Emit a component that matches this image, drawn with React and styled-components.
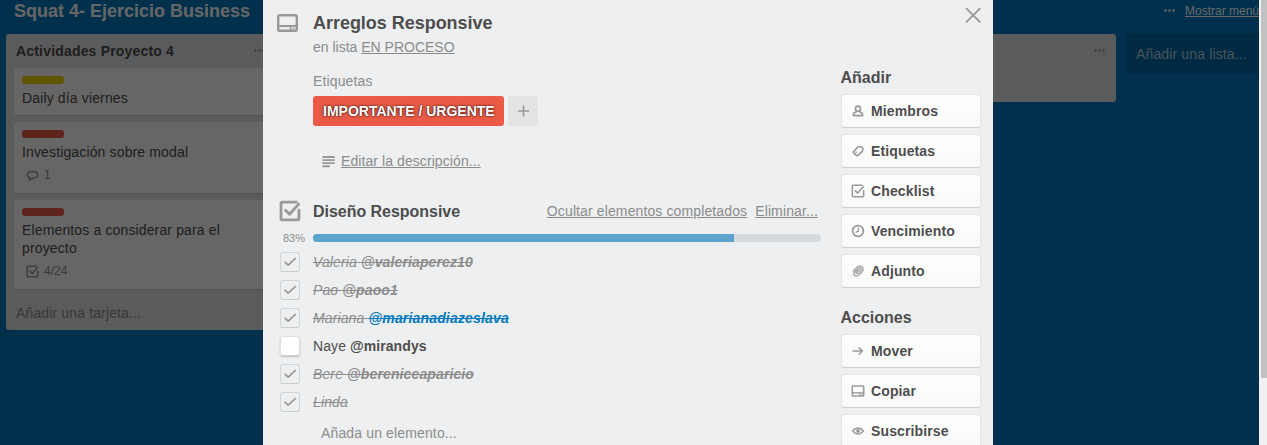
import React from "react";
import styled, { createGlobalStyle, css } from "styled-components";

const Global = createGlobalStyle`
  * { box-sizing: border-box; }
  html, body { margin: 0; padding: 0; overflow: hidden; }
  body { font-family: "Liberation Sans", Arial, sans-serif; font-size: 14px; line-height: 18px; color: #4d4d4d; }
  h1, h2, h3, p { margin: 0; font-weight: 700; }
`;

const Window = styled.div`
  position: relative;
  display: flex;
  width: 1267px;
  height: 445px;
  overflow: hidden;
  letter-spacing: 0.14px;
`;
const Board = styled.div`
  flex: 1;
  min-width: 0;
  overflow: hidden;
  background: #0079bf;
`;
const ScrollTrack = styled.div`
  width: 8px;
  flex: none;
  padding-left: 2px;
  background: #f1f1f1;
`;
const ScrollThumb = styled.div`
  height: 378px;
  background: #c1c1c1;
`;
const BoardHeader = styled.header`
  display: flex;
  justify-content: space-between;
  height: 34px;
  padding-left: 14px;
  color: #fff;
`;
const BoardTitle = styled.h1`
  font-size: 18px;
  line-height: 22px;
  letter-spacing: 0;
`;
const MenuLink = styled.div`
  display: flex;
  gap: 10px;
  width: 95px;
  font-size: 12px;
  line-height: 22px;
  letter-spacing: 0;
  white-space: nowrap;
  svg { margin-top: 9px; flex: none; }
  span { text-decoration: underline; }
`;
const Lists = styled.div`
  display: flex;
  align-items: flex-start;
  gap: 10px;
  padding-left: 6px;
`;
const List = styled.section`
  flex: none;
  width: 270px;
  height: ${(p) => p.$height}px;
  padding: 0 8px;
  border-radius: 3px;
  background: #e2e4e6;
`;
const ListHeader = styled.div`
  display: flex;
  justify-content: space-between;
  height: 34px;
  padding: 8px 3px 0 2px;
  color: #4d4d4d;
  svg { margin-top: 7px; color: #999; }
`;
const ListName = styled.h2`
  font-size: 14px;
  line-height: 18px;
  letter-spacing: 0.18px;
`;
const Card = styled.article`
  height: ${(p) => p.$height}px;
  margin-bottom: 6px;
  padding: 8px;
  border-radius: 3px;
  background: #fff;
  border-bottom: 1px solid #ccc;
`;
const CardLabel = styled.div`
  width: 42px;
  height: 8px;
  margin-bottom: 5px;
  border-radius: 3px;
  background: ${(p) => p.$color};
`;
const CardText = styled.div`
  color: #4d4d4d;
`;
const Badge = styled.div`
  display: flex;
  align-items: center;
  gap: 5px;
  margin: 5px 0 0 4px;
  height: 18px;
  font-size: 12px;
  letter-spacing: 0;
  color: #8c8c8c;
  svg { color: #999; }
`;
const AddCard = styled.div`
  padding: 8px 2px;
  color: #8c8c8c;
`;
const AddList = styled.div`
  flex: none;
  width: 270px;
  height: 40px;
  padding: 11px 10px;
  border-radius: 3px;
  background: #006aa7;
  color: #b8d0de;
`;
const Overlay = styled.div`
  position: absolute;
  inset: 0 8px 0 0;
  display: flex;
  justify-content: center;
  padding-right: 3px;
  background: rgba(0, 0, 0, 0.6);
`;
const Modal = styled.div`
  display: flex;
  width: 730px;
  height: 445px;
  overflow: hidden;
  background: #edeff0;
`;
const Main = styled.main`
  width: 577px;
  padding: 0 19px 0 16px;
`;
const Row = styled.div`
  display: flex;
  align-items: center;
  height: ${(p) => p.$height}px;
`;
const TitleRow = styled.div`
  display: flex;
  height: 38px;
  padding-top: 11px;
`;
const TitleIcon = styled.div`
  width: 36px;
  margin-left: -2px;
  padding-top: 3px;
  color: #999;
  svg { display: block; }
`;
const Gutter = styled.div`
  flex: none;
  width: 34px;
  height: 100%;
  display: flex;
  align-items: center;
  color: #999;
  font-size: 11px;
  letter-spacing: 0;
  svg { display: block; }
`;
const CardTitle = styled.h2`
  font-size: 18px;
  line-height: 24px;
  letter-spacing: -0.03px;
`;
const SectionRow = styled(Row)`
  margin-top: 24px;
`;
const SectionTitle = styled.h3`
  flex: 1;
  padding-top: 2px;
  font-size: 16px;
  line-height: 20px;
  letter-spacing: -0.03px;
`;
const Quiet = styled.span`
  color: #8c8c8c;
  white-space: nowrap;
  ${(p) => p.$link && css`text-decoration: underline;`}
`;
const Intro = styled.div`
  padding-left: 34px;
`;
const InList = styled.div`
  margin-bottom: 16px;
  letter-spacing: 0;
`;
const Labels = styled.div`
  display: flex;
  gap: 4px;
  margin-top: 6px;
`;
const Label = styled.div`
  width: 191px;
  height: 30px;
  padding-left: 10px;
  border-radius: 3px;
  background: #eb5a46;
  color: #fff;
  font-weight: 700;
  line-height: 30px;
  letter-spacing: 0;
  white-space: nowrap;
  text-shadow: 0 0 5px rgba(0, 0, 0, 0.2), 0 0 2px #000;
`;
const AddLabel = styled.div`
  display: flex;
  align-items: center;
  justify-content: center;
  width: 30px;
  height: 30px;
  border-radius: 3px;
  background: #e2e4e6;
  color: #999;
`;
const Description = styled.div`
  display: flex;
  align-items: center;
  gap: 6px;
  height: 18px;
  margin: 26px 0 0 9px;
  color: #999;
  letter-spacing: 0.08px;
`;
const SectionLinks = styled.div`
  display: flex;
  gap: 8px;
  padding-right: 3px;
  letter-spacing: 0.12px;
`;
const Progress = styled.div`
  width: 508px;
  height: 8px;
  overflow: hidden;
  border-radius: 4px;
  background: #d6dadc;
`;
const ProgressFill = styled.div`
  height: 100%;
  background: #5ba4cf;
`;
const Percent = styled.span`
  padding-left: 4px;
  color: #8c8c8c;
`;
const Box = styled.span`
  display: flex;
  align-items: center;
  justify-content: center;
  width: 20px;
  height: 20px;
  margin-left: 1px;
  border: 1px solid ${(p) => (p.$done ? "#d2d5d7" : "#dcdfe0")};
  border-bottom-color: #c9cccd;
  border-radius: 3px;
  background: ${(p) => (p.$done ? "transparent" : "#fff")};
  box-shadow: ${(p) => (p.$done ? "none" : "0 1px 2px rgba(0,0,0,.2)")};
  svg { margin-left: -1px; }
`;
const ItemText = styled.span`
  white-space: nowrap;
  letter-spacing: ${(p) => (p.$done ? 0.12 : 0.08)}px;
  ${(p) => p.$done && css`
    color: #8c8c8c;
    font-style: italic;
    text-decoration: line-through;
  `}
`;
const Mention = styled.b`
  ${(p) => p.$me && css`
    color: #0079bf;
    letter-spacing: 0.17px;
    text-decoration: line-through;
  `}
`;
const NewItem = styled.div`
  padding: 8px 0 0 42px;
`;
const Side = styled.aside`
  width: 141px;
`;
const CloseRow = styled.div`
  display: flex;
  justify-content: flex-end;
  height: 67px;
  padding-top: 7px;
  color: #999;
`;
const SideTitle = styled.h3`
  height: 27px;
  padding: 1px 0 0 0.5px;
  font-size: 16px;
  line-height: 20px;
  letter-spacing: 0;
`;
const SideGroup = styled.div`
  margin-bottom: 19px;
`;
const SideButton = styled.div`
  display: flex;
  align-items: center;
  gap: 6px;
  height: 34px;
  margin: 0 0 6px 1px;
  padding-left: 9px;
  border: 1px solid #e2e4e6;
  border-bottom-color: #cdd0d2;
  border-radius: 3px;
  background: linear-gradient(#fff, #f8f9f9);
  font-weight: 700;
  letter-spacing: 0.13px;
  svg { color: #999; flex: none; }
`;

const Svg = ({ size = 14, box = 14, sw = 1.5, children }) => (
  <svg width={size} height={size} viewBox={`0 0 ${box} ${box}`} fill="none" stroke="currentColor"
    strokeWidth={sw} strokeLinecap="round" strokeLinejoin="round">{children}</svg>
);
const Dots = () => (
  <svg width="11" height="3" viewBox="0 0 11 3" fill="currentColor">
    <circle cx="1.5" cy="1.5" r="1.3" /><circle cx="5.5" cy="1.5" r="1.3" /><circle cx="9.5" cy="1.5" r="1.3" />
  </svg>
);
const CheckSquare = ({ size = 14, sw = 1.4 }) => (
  <Svg size={size} sw={sw}><path d="M11 1.3H2Q1.3 1.3 1.3 2v10q0 .7.7.7h10q.7 0 .7-.7V6.5" /><path d="M4.2 6.6 6.7 9.1 12.5 2.6" /></Svg>
);
const TitleCardIcon = () => (
  <svg width="21" height="18" viewBox="0 0 21 18" fill="none" stroke="currentColor" strokeWidth="2.4">
    <rect x="1.2" y="1.2" width="18.6" height="15.6" rx="1.6" />
    <path d="M1 12H20" strokeWidth="2" />
    <path d="M13.6 12v5" strokeWidth="1.8" />
    <path d="M16 14.5h1.6" strokeWidth="1.4" />
  </svg>
);
const SmallCardIcon = () => (
  <svg width="14" height="12" viewBox="0 0 14 12" fill="none" stroke="currentColor" strokeWidth="1.6">
    <rect x="1.3" y="1" width="11.4" height="10" rx="0.8" />
    <path d="M1 7.9H13" strokeWidth="1.4" />
    <path d="M8.9 8v3M10.4 9.6h1.1" strokeWidth="1.1" />
  </svg>
);
const icons = {
  member: <Svg sw={1.6}><circle cx="7" cy="4.7" r="2.6" /><path d="M5.4 7 4.8 8.3 2.7 9.3Q2.3 9.7 2.3 11.6H11.7Q11.7 9.7 11.3 9.3L9.2 8.3 8.6 7" /></Svg>,
  tag: <Svg sw={1.6}><path d="M2.5 7.8 6.6 3.2Q7 2.8 7.6 2.7L10 2.5 11.9 4.3 11.7 6.4Q11.7 7 11.3 7.4L6.8 11.6Q6 12 5.4 11.4L2.6 9.2Q1.9 8.6 2.5 7.8Z" /><path d="M5 8v1" strokeWidth="1.4" /></Svg>,
  check: <CheckSquare sw={1.5} />,
  clock: <Svg sw={1.7}><circle cx="7" cy="7" r="5.4" /><path d="M7.3 3.8V7.2L5 8.2" strokeWidth="1.3" /></Svg>,
  clip: <Svg sw={1.2}><path d="M2.1 7.1 5.9 3.3C9.6.3 14 4 11.1 7.7L7.5 11.1C4.6 13.4 1.2 10.7 3.6 7.9L7.2 4.4C8.9 3 11.1 4.9 9.6 6.6L6.7 9.4C5.5 10.2 4.4 9.1 5.3 8.1L7.9 5.7" /></Svg>,
  arrow: <Svg sw={1.7}><path d="M2.2 7H11.2M8.3 4 11.3 7 8.3 10" /></Svg>,
  card: <SmallCardIcon />,
  eye: <Svg sw={1.6}><path d="M1.6 7Q4.1 4 7 4T12.4 7Q9.9 10 7 10T1.6 7Z" /><circle cx="7" cy="7" r="1.1" fill="currentColor" /></Svg>,
};

const items = [
  { name: "Valeria", user: "@valeriaperez10", done: true },
  { name: "Pao", user: "@paoo1", done: true },
  { name: "Mariana", user: "@marianadiazeslava", done: true, me: true },
  { name: "Naye", user: "@mirandys" },
  { name: "Bere", user: "@bereniceaparicio", done: true },
  { name: "Linda", done: true },
];
const groups = [
  { title: "Añadir", buttons: [["member", "Miembros"], ["tag", "Etiquetas"], ["check", "Checklist"], ["clock", "Vencimiento"], ["clip", "Adjunto"]] },
  { title: "Acciones", buttons: [["arrow", "Mover"], ["card", "Copiar"], ["eye", "Suscribirse"]] },
];

export default function App() {
  return (
    <Window>
      <Global />
      <Board>
        <BoardHeader>
          <BoardTitle>Squat 4- Ejercicio Business</BoardTitle>
          <MenuLink><Dots /><span>Mostrar menú</span></MenuLink>
        </BoardHeader>
        <Lists>
          <List $height={296}>
            <ListHeader><ListName>Actividades Proyecto 4</ListName><Dots /></ListHeader>
            <Card $height={48}>
              <CardLabel $color="#f2d600" />
              <CardText>Daily día viernes</CardText>
            </Card>
            <Card $height={72}>
              <CardLabel $color="#eb5a46" />
              <CardText>Investigación sobre modal</CardText>
              <Badge>
                <Svg size={13} sw={1.6}><path d="M4.4 9.6C-.4 7.8.6 2.6 7 2.6c7.4 0 7.4 6.9 0 7.2L3.2 12.3Q4.6 11 4.4 9.6Z" /></Svg>
                <span>1</span>
              </Badge>
            </Card>
            <Card $height={90}>
              <CardLabel $color="#eb5a46" />
              <CardText>Elementos a considerar para el proyecto</CardText>
              <Badge><CheckSquare size={13} sw={1.7} /><span>4/24</span></Badge>
            </Card>
            <AddCard>Añadir una tarjeta...</AddCard>
          </List>
          <List $height={68} />
          <List $height={68} />
          <List $height={68}><ListHeader><span /><Dots /></ListHeader></List>
          <AddList>Añadir una lista...</AddList>
        </Lists>
      </Board>
      <ScrollTrack><ScrollThumb /></ScrollTrack>
      <Overlay>
        <Modal>
          <Main>
            <TitleRow>
              <TitleIcon><TitleCardIcon /></TitleIcon>
              <CardTitle>Arreglos Responsive</CardTitle>
            </TitleRow>
            <Intro>
              <InList><Quiet>en lista </Quiet><Quiet $link>EN PROCESO</Quiet></InList>
              <Quiet>Etiquetas</Quiet>
              <Labels>
                <Label>IMPORTANTE / URGENTE</Label>
                <AddLabel><Svg sw={1.6}><path d="M7.5 2v10M2.5 7h10" /></Svg></AddLabel>
              </Labels>
              <Description>
                <Svg size={13} sw={2}><path d="M1.2 2.2h11.8M1.2 5.5h11.8M1.2 8.8h11.8M1.2 12.1h6.6" /></Svg>
                <Quiet $link>Editar la descripción...</Quiet>
              </Description>
            </Intro>
            <SectionRow $height={34}>
              <Gutter><CheckSquare size={22} sw={1.8} /></Gutter>
              <SectionTitle>Diseño Responsive</SectionTitle>
              <SectionLinks>
                <Quiet $link>Ocultar elementos completados</Quiet>
                <Quiet $link>Eliminar...</Quiet>
              </SectionLinks>
            </SectionRow>
            <Row $height={20}>
              <Gutter><Percent>83%</Percent></Gutter>
              <Progress><ProgressFill style={{ width: `${(421 / 508) * 100}%` }} /></Progress>
            </Row>
            {items.map((it) => (
              <Row key={it.name} $height={28}>
                <Gutter>
                  <Box $done={it.done}>{it.done && <Svg sw={1.7}><path d="M2 7.2 5.2 10.2 12.2 3.6" /></Svg>}</Box>
                </Gutter>
                <ItemText $done={it.done}>{it.name} {it.user && <Mention $me={it.me}>{it.user}</Mention>}</ItemText>
              </Row>
            ))}
            <NewItem><Quiet>Añada un elemento...</Quiet></NewItem>
          </Main>
          <Side>
            <CloseRow><Svg size={16} box={16} sw={1.9}><path d="M1.6 1.7l13.2 13.2M14.8 1.7l-13.2 13.2" /></Svg></CloseRow>
            {groups.map((g) => (
              <SideGroup key={g.title}>
                <SideTitle>{g.title}</SideTitle>
                {g.buttons.map(([icon, text]) => (
                  <SideButton key={text}>{icons[icon]}{text}</SideButton>
                ))}
              </SideGroup>
            ))}
          </Side>
        </Modal>
      </Overlay>
    </Window>
  );
}
